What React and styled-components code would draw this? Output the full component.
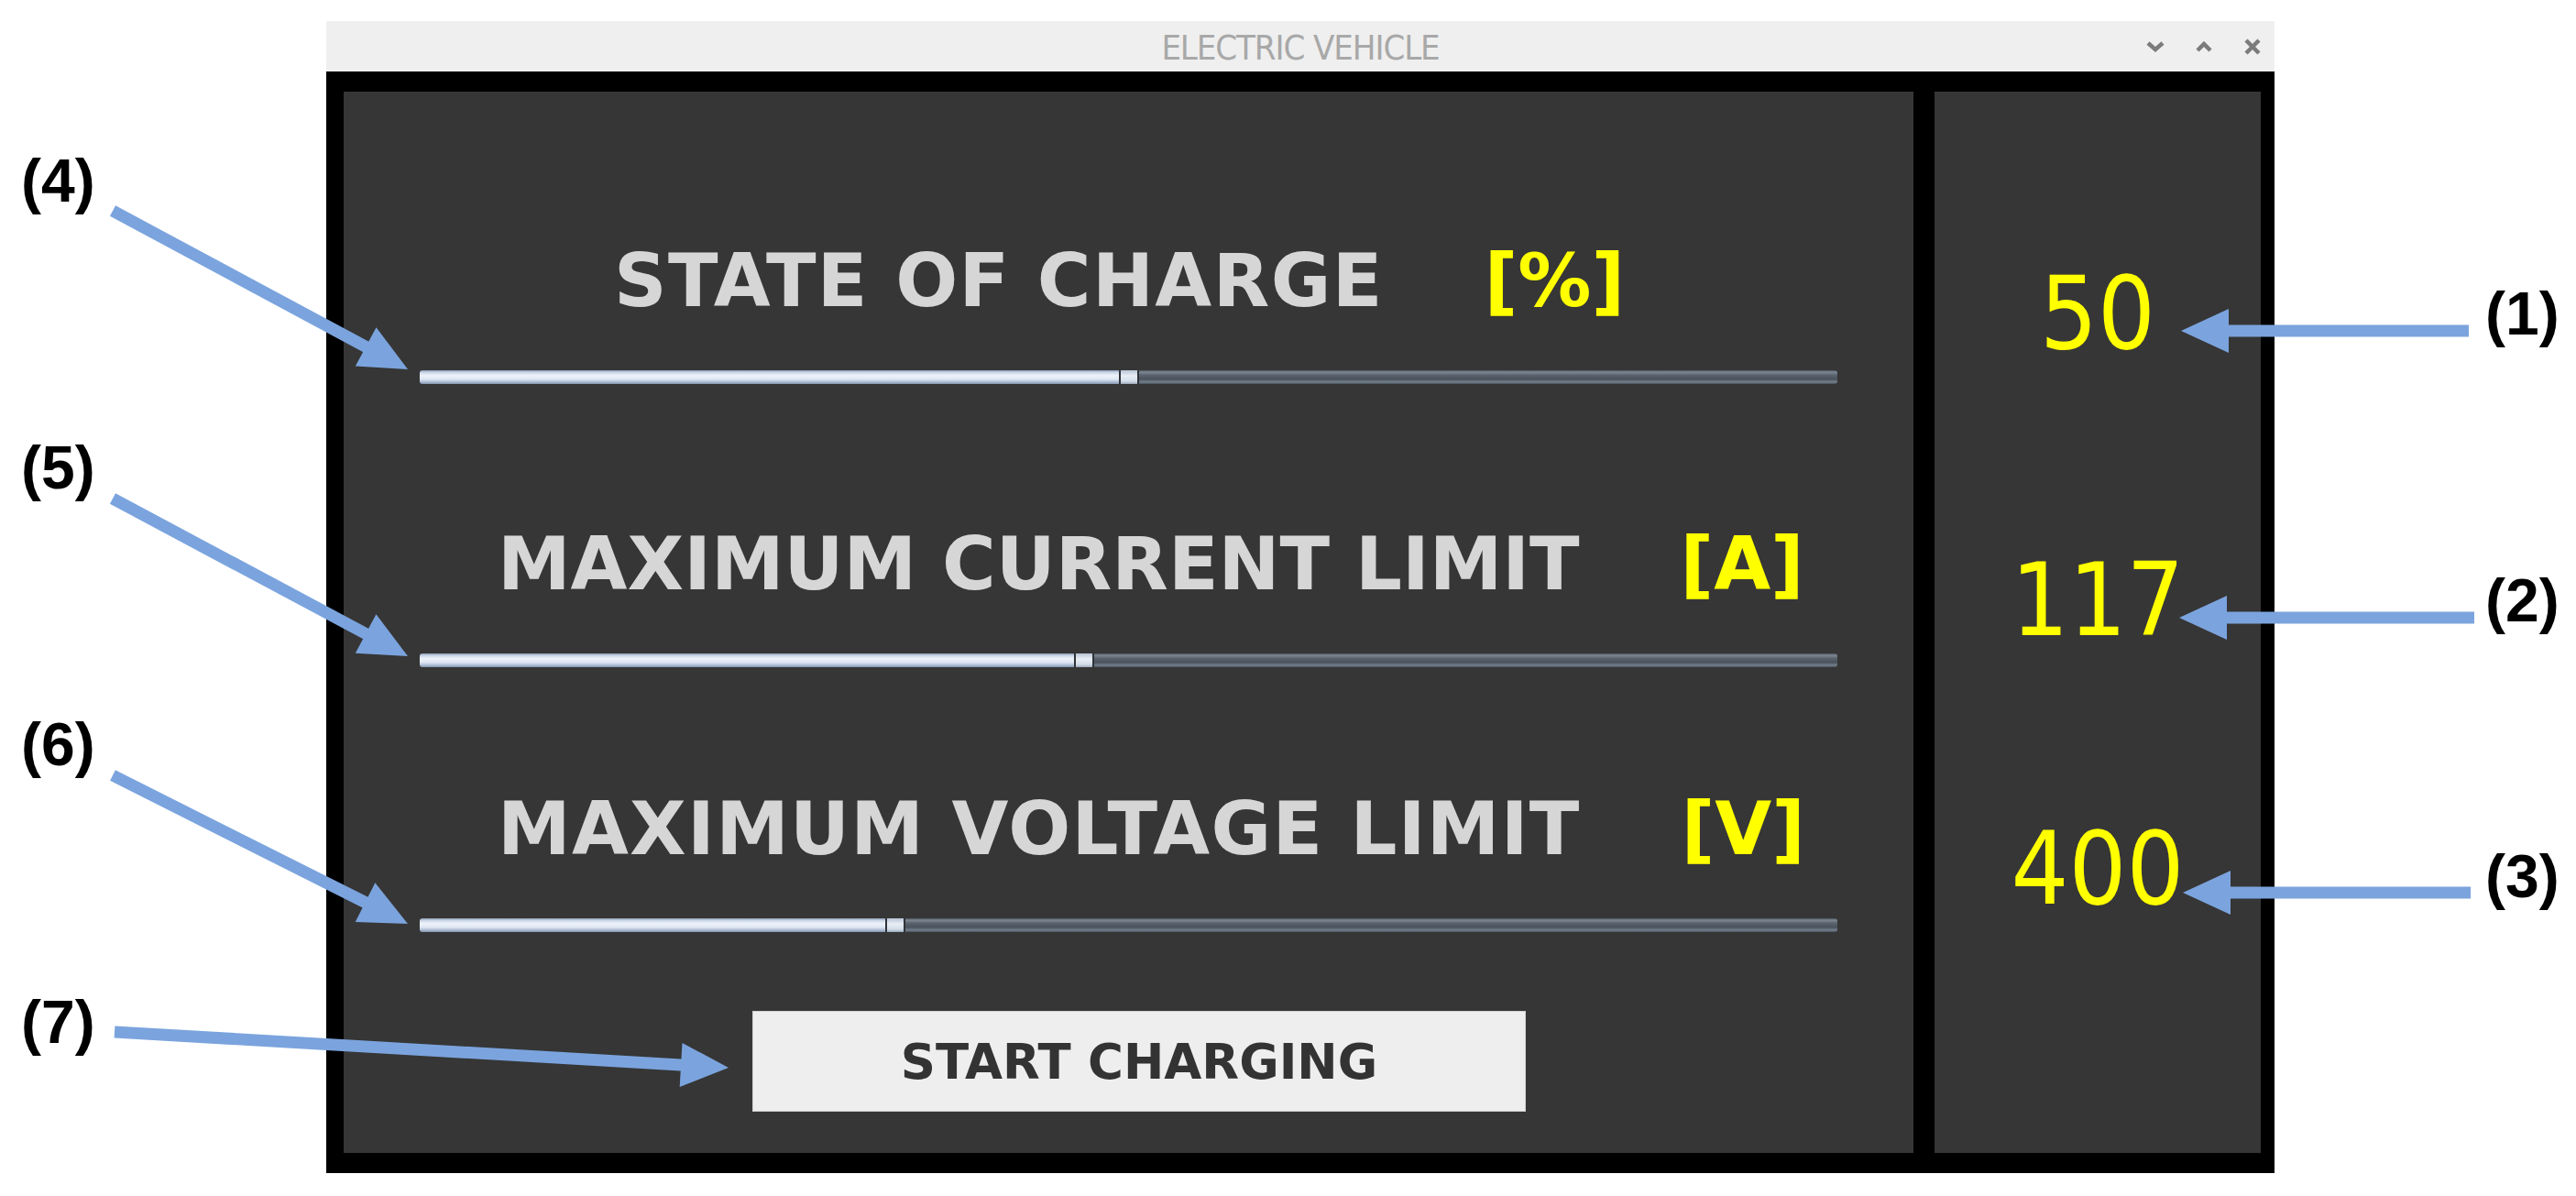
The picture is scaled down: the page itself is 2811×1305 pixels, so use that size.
import React from "react";
import styled, { createGlobalStyle } from "styled-components";

const GlobalStyle = createGlobalStyle`
  html, body { margin: 0; padding: 0; background: #ffffff; }
  body {
    width: 2811px;
    height: 1305px;
    overflow: hidden;
    font-family: "DejaVu Sans", "Liberation Sans", sans-serif;
  }
  #root { width: 2811px; height: 1305px; }
`;

const Page = styled.div`
  position: relative;
  width: 2811px;
  height: 1305px;
  box-sizing: border-box;
  padding: 23px 0 0 356px;
`;

const Window = styled.div`
  width: 2126px;
  display: flex;
  flex-direction: column;
`;

const TitleBar = styled.div`
  height: 55px;
  background: #efefef;
  display: grid;
  grid-template-columns: 1fr auto 1fr;
  align-items: center;
`;

const Title = styled.div`
  grid-column: 2;
  font-family: "Liberation Sans Narrow", "DejaVu Sans Condensed", "Liberation Sans", sans-serif;
  font-stretch: condensed;
  font-size: 38px;
  letter-spacing: -1.1px;
  line-height: 1;
  color: #a8a8a8;
  padding-top: 2px;
  white-space: nowrap;
`;

const Controls = styled.div`
  grid-column: 3;
  justify-self: end;
  display: flex;
  align-items: center;
  gap: 34px;
  padding-right: 14px;
`;

const Frame = styled.div`
  height: 1202px;
  box-sizing: border-box;
  background: #000000;
  padding: 22px 15px 22px 19px;
  display: flex;
  gap: 23px;
`;

const ControlPanel = styled.div`
  width: 1713px;
  flex: none;
  background: #363636;
  box-sizing: border-box;
  padding: 167px 83px 0 83px;
  display: flex;
  flex-direction: column;
`;

const ReadoutPanel = styled.div`
  flex: 1;
  background: #363636;
  box-sizing: border-box;
  padding-top: 187px;
  display: flex;
  flex-direction: column;
  align-items: center;
`;

const Group = styled.div`
  display: flex;
  flex-direction: column;
  gap: 57px;
  margin-top: ${(p) => p.$top}px;
`;

const LabelRow = styled.div`
  display: flex;
  align-items: baseline;
  gap: 110px;
  padding-left: ${(p) => p.$indent}px;
`;

const Label = styled.span`
  font-family: "DejaVu Sans", sans-serif;
  font-weight: 700;
  font-size: 80px;
  line-height: 80px;
  letter-spacing: ${(p) => p.$spacing || 0}px;
  color: #d6d6d6;
  white-space: nowrap;
`;

const Unit = styled(Label)`
  color: #ffff00;
`;

const Track = styled.div`
  display: flex;
  width: 100%;
  height: 15px;
`;

const Fill = styled.div`
  flex: none;
  border-radius: 3px 0 0 3px;
  background: linear-gradient(
    to bottom,
    #8a9ab3 0%,
    #c9d5e6 15%,
    #eef3fa 38%,
    #dfe7f3 65%,
    #aebdd3 85%,
    #8194b0 100%
  );
`;

const Thumb = styled.div`
  flex: none;
  width: 18px;
  border-left: 2px solid #2f3338;
  border-right: 2px solid #2f3338;
  background: linear-gradient(to bottom, #b7c3d3 0%, #e9eef5 40%, #d3dce8 80%, #9aa8bb 100%);
`;

const Rest = styled.div`
  flex: 1;
  border-radius: 0 3px 3px 0;
  background: linear-gradient(
    to bottom,
    #4a5159 0%,
    #7e8894 14%,
    #5a636e 35%,
    #4a525c 65%,
    #73808e 86%,
    #485058 100%
  );
`;

const StartButton = styled.button`
  margin-top: 86px;
  margin-left: 363px;
  width: 844px;
  height: 110px;
  flex: none;
  border: none;
  background: #eeeeee;
  box-shadow: 0 0 0 1px #d0d0d0 inset;
  font-family: "DejaVu Sans", sans-serif;
  font-weight: 700;
  font-size: 53px;
  color: #333333;
  display: flex;
  align-items: center;
  justify-content: center;
  padding: 0;
  cursor: pointer;
`;

const Value = styled.div`
  margin-top: ${(p) => p.$top}px;
  font-family: "DejaVu Sans Condensed", "DejaVu Sans", sans-serif;
  font-stretch: condensed;
  font-size: 110px;
  line-height: 110px;
  color: #ffff00;
`;

const Overlay = styled.svg`
  position: absolute;
  left: 0;
  top: 0;
  pointer-events: none;
`;

const Callout = styled.div`
  position: absolute;
  left: ${(p) => p.$x}px;
  top: ${(p) => p.$y}px;
  font-family: "Liberation Sans", Arial, sans-serif;
  font-weight: 700;
  font-size: 66px;
  line-height: 66px;
  color: #000000;
  white-space: nowrap;
`;

function Slider({ value, max }) {
  const frac = value / max;
  return (
    <Track>
      <Fill style={{ width: `calc((100% - 22px) * ${frac})` }} />
      <Thumb />
      <Rest />
    </Track>
  );
}

function Arrow({ from, to }) {
  const [x1, y1] = from;
  const [x2, y2] = to;
  const dx = x2 - x1;
  const dy = y2 - y1;
  const L = Math.hypot(dx, dy);
  const ux = dx / L;
  const uy = dy / L;
  const len = 52;
  const half = 24;
  const bx = x2 - ux * len;
  const by = y2 - uy * len;
  const px = -uy;
  const py = ux;
  const pts = `${x2},${y2} ${bx + px * half},${by + py * half} ${bx - px * half},${by - py * half}`;
  return (
    <g fill="#7ba4de" stroke="none">
      <line x1={x1} y1={y1} x2={bx + ux * 4} y2={by + uy * 4} stroke="#7ba4de" strokeWidth="13" />
      <polygon points={pts} />
    </g>
  );
}

const rows = [
  { label: "STATE OF CHARGE", unit: "[%]", indent: 212, top: 0, spacing: 1.4, value: 50, max: 100 },
  { label: "MAXIMUM CURRENT LIMIT", unit: "[A]", indent: 85, top: 157, spacing: 0, value: 117, max: 250 },
  { label: "MAXIMUM VOLTAGE LIMIT", unit: "[V]", indent: 85, top: 137, spacing: 1.3, value: 400, max: 1200 },
];

const readouts = [
  { value: "50", top: 0 },
  { value: "117", top: 203 },
  { value: "400", top: 183 },
];

const arrows = [
  { from: [123, 230], to: [445, 403] },
  { from: [123, 544], to: [445, 716] },
  { from: [123, 846], to: [445, 1008] },
  { from: [125, 1126], to: [795, 1165] },
  { from: [2694, 361], to: [2380, 361] },
  { from: [2700, 674], to: [2378, 674] },
  { from: [2696, 974], to: [2382, 974] },
];

const callouts = [
  { text: "(4)", x: 23, y: 164 },
  { text: "(5)", x: 23, y: 477 },
  { text: "(6)", x: 23, y: 779 },
  { text: "(7)", x: 23, y: 1082 },
  { text: "(1)", x: 2712, y: 309 },
  { text: "(2)", x: 2712, y: 622 },
  { text: "(3)", x: 2712, y: 923 },
];

export default function App() {
  return (
    <>
      <GlobalStyle />
      <Page>
        <Window>
          <TitleBar>
            <Title>ELECTRIC VEHICLE</Title>
            <Controls>
              <svg width="20" height="12" viewBox="0 0 20 12">
                <polyline points="2,2 10,9 18,2" fill="none" stroke="#7b7b7b" strokeWidth="4.5" />
              </svg>
              <svg width="18" height="12" viewBox="0 0 18 12">
                <polyline points="2,10 9,3 16,10" fill="none" stroke="#7b7b7b" strokeWidth="4.5" />
              </svg>
              <svg width="20" height="18" viewBox="0 0 20 18">
                <path d="M3 2 L17 16 M17 2 L3 16" fill="none" stroke="#7b7b7b" strokeWidth="4.5" />
              </svg>
            </Controls>
          </TitleBar>
          <Frame>
            <ControlPanel>
              {rows.map((r) => (
                <Group key={r.label} $top={r.top}>
                  <LabelRow $indent={r.indent}>
                    <Label $spacing={r.spacing}>{r.label}</Label>
                    <Unit>{r.unit}</Unit>
                  </LabelRow>
                  <Slider value={r.value} max={r.max} />
                </Group>
              ))}
              <StartButton type="button">START CHARGING</StartButton>
            </ControlPanel>
            <ReadoutPanel>
              {readouts.map((v) => (
                <Value key={v.value} $top={v.top}>
                  {v.value}
                </Value>
              ))}
            </ReadoutPanel>
          </Frame>
        </Window>
        <Overlay width="2811" height="1305" viewBox="0 0 2811 1305">
          {arrows.map((a, i) => (
            <Arrow key={i} from={a.from} to={a.to} />
          ))}
        </Overlay>
        {callouts.map((c) => (
          <Callout key={c.text} $x={c.x} $y={c.y}>
            {c.text}
          </Callout>
        ))}
      </Page>
    </>
  );
}
